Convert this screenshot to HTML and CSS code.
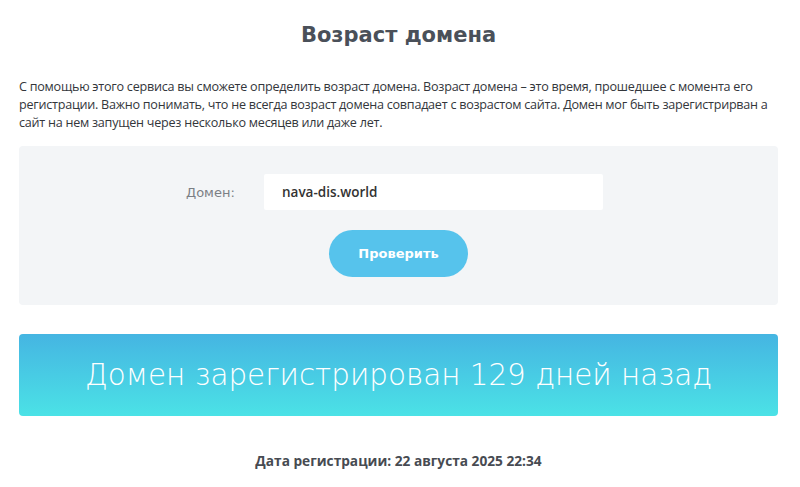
FILE: index.html
```html
<!DOCTYPE html>
<html lang="ru">
<head>
<meta charset="utf-8">
<title>Возраст домена</title>
<link rel="stylesheet" href="styles.css">
</head>
<body>
<main class="page">
  <h1 class="title">Возраст домена</h1>
  <p class="intro">С помощью этого сервиса вы сможете определить возраст домена. Возраст домена – это время, прошедшее с момента его регистрации. Важно понимать, что не всегда возраст домена совпадает с возрастом сайта. Домен мог быть зарегистрирван а сайт на нем запущен через несколько месяцев или даже лет.</p>
  <form class="checker">
    <div class="field">
      <label class="label" for="domain">Домен:</label>
      <input class="input" id="domain" type="text" value="nava-dis.world">
    </div>
    <button class="btn" type="button">Проверить</button>
  </form>
  <div class="result">Домен зарегистрирован 129 дней назад</div>
  <p class="date">Дата регистрации: 22 августа 2025 22:34</p>
</main>
</body>
</html>
```

FILE: styles.css
```css
* { box-sizing: border-box; }
html, body { margin: 0; padding: 0; background: #fff; }
body { font-family: "Open Sans", "Noto Sans", sans-serif; color: #333; }
.page { width: 759px; margin-left: 19px; padding-top: 21px; }
.title {
  margin: 0;
  text-align: center;
  font-family: "DejaVu Sans", sans-serif;
  font-weight: 700;
  font-size: 21px;
  line-height: 28px;
  color: #4a5059;
}
.intro {
  margin: 29px 0 0;
  font-size: 12.6px;
  letter-spacing: -0.25px;
  line-height: 18px;
  color: #33363b;
}
.checker {
  margin-top: 14px;
  height: 159px;
  background: #f3f5f7;
  border-radius: 4px;
  padding-top: 28px;
  display: flex;
  flex-direction: column;
  align-items: center;
}
.field { display: flex; align-items: center; margin-right: 8px; }
.label {
  width: 78px;
  font-size: 13px;
  color: #7b7f85;
  font-family: "DejaVu Sans", sans-serif;
}
.input {
  width: 339px;
  height: 36px;
  border: none;
  border-radius: 2px;
  background: #fff;
  padding: 0 18px;
  font-family: "Open Sans", sans-serif;
  font-size: 13.5px;
  font-weight: 600;
  color: #333;
  outline: none;
}
.btn {
  margin-top: 20px;
  width: 139px;
  height: 47px;
  border: none;
  border-radius: 24px;
  background: #56c3ec;
  color: #fff;
  font-family: "DejaVu Sans", sans-serif;
  font-weight: 700;
  font-size: 13px;
}
.result {
  margin-top: 29px;
  height: 82px;
  border-radius: 4px;
  background: linear-gradient(to bottom, #45b5e2, #4be2e6);
  color: #fff;
  font-family: "DejaVu Sans", sans-serif;
  font-weight: 200;
  font-size: 29.4px;
  display: flex;
  align-items: center;
  justify-content: center;
}
.date {
  margin: 35px 0 0;
  text-align: center;
  font-family: "Open Sans", sans-serif;
  font-weight: 700;
  font-size: 13.7px;
  color: #474b52;
}
```
